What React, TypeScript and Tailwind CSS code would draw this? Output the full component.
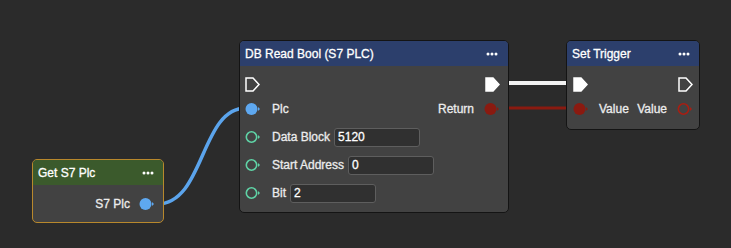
import React from "react";

const font = { fontFamily: '"Liberation Sans", Arial, sans-serif' };

const ExecPin = ({ filled }: { filled?: boolean }) => (
  <svg width="15" height="15" viewBox="0 0 15 15" className="shrink-0">
    <path
      d="M1 1 H8 L14 7.5 L8 14 H1 Z"
      fill={filled ? "#ffffff" : "none"}
      stroke="#ffffff"
      strokeWidth="1.5"
      strokeLinejoin="miter"
    />
  </svg>
);

const DataPin = ({ color, filled }: { color: string; filled?: boolean }) => (
  <svg width="16" height="14" viewBox="0 0 16 14" className="shrink-0">
    <circle
      cx="6.5"
      cy="7"
      r={filled ? 6 : 5.2}
      fill={filled ? color : "none"}
      stroke={color}
      strokeWidth={filled ? 0 : 1.6}
    />
    <path d="M13 5 L15 7 L13 9 Z" fill={color} />
  </svg>
);

const Dots = () => (
  <svg width="12" height="4" viewBox="0 0 12 4" className="shrink-0">
    <circle cx="2" cy="2" r="1.5" fill="#fff" />
    <circle cx="6" cy="2" r="1.5" fill="#fff" />
    <circle cx="10" cy="2" r="1.5" fill="#fff" />
  </svg>
);

const Field = ({ label, value, w }: { label: string; value: string; w: string }) => (
  <div className="flex h-[28px] items-center pl-[5px]">
    <DataPin color="#5fd3a6" />
    <span className="ml-[11px] text-[12px] text-[#ececec] [-webkit-text-stroke:0.3px_#ececec]">{label}</span>
    <div
      className={`ml-[4px] flex h-[19px] items-center rounded-[3px] border border-[#5e5e5e] bg-[#303030] px-[3px] text-[12px] text-white [-webkit-text-stroke:0.3px_#ffffff] ${w}`}
    >
      {value}
    </div>
  </div>
);

const label = "text-[12px] text-[#ececec] [-webkit-text-stroke:0.3px_#ececec]";
const header = "flex h-[25px] items-center justify-between pl-[5px] text-[12px] text-white [-webkit-text-stroke:0.3px_#ffffff]";

export default function App() {
  return (
    <div className="relative h-[248px] w-[731px] overflow-hidden bg-[#2b2b2b]" style={font}>
      <svg className="absolute left-0 top-0" width="731" height="248">
        <path d="M157 204 C 205 204, 200 108, 246 108" fill="none" stroke="#5ba4ec" strokeWidth="3.5" />
        <line x1="500" y1="83" x2="570" y2="83" stroke="#f2f2f2" strokeWidth="4" />
        <line x1="498" y1="108" x2="574" y2="108" stroke="#8a1a10" strokeWidth="3" />
      </svg>

      {/* DB Read Bool */}
      <div className="absolute left-[239px] top-[40px] w-[270px] overflow-hidden rounded-[5px] border border-[#141414] bg-[#424242]">
        <div className={`${header} bg-[#2c3f6c] pr-[10px]`}>
          <span>DB Read Bool (S7 PLC)</span>
          <Dots />
        </div>
        <div className="flex flex-col pb-[5px] pt-[7px]">
          <div className="flex h-[22px] items-center justify-between pl-[5px] pr-[8px]">
            <ExecPin />
            <ExecPin filled />
          </div>
          <div className="flex h-[28px] items-center pl-[5px] pr-[8px]">
            <DataPin color="#5ea8f0" filled />
            <span className={`ml-[11px] ${label}`}>Plc</span>
            <span className={`ml-auto mr-[10px] ${label}`}>Return</span>
            <DataPin color="#8a1a10" filled />
          </div>
          <Field label="Data Block" value="5120" w="w-[86px]" />
          <Field label="Start Address" value="0" w="w-[86px]" />
          <Field label="Bit" value="2" w="w-[86px]" />
        </div>
      </div>

      {/* Set Trigger */}
      <div className="absolute left-[566px] top-[40px] w-[134px] overflow-hidden rounded-[5px] border border-[#141414] bg-[#424242]">
        <div className={`${header} bg-[#2c3f6c] pr-[9px]`}>
          <span>Set Trigger</span>
          <Dots />
        </div>
        <div className="flex flex-col pb-[6px] pt-[7px]">
          <div className="flex h-[22px] items-center justify-between pl-[6px] pr-[6px]">
            <ExecPin filled />
            <ExecPin />
          </div>
          <div className="flex h-[28px] items-center pl-[6px] pr-[6px]">
            <DataPin color="#8a1a10" filled />
            <span className={`ml-[10px] ${label}`}>Value</span>
            <span className={`ml-auto mr-[10px] ${label}`}>Value</span>
            <DataPin color="#a81e12" />
          </div>
        </div>
      </div>

      {/* Get S7 Plc */}
      <div className="absolute left-[32px] top-[159px] w-[132px] overflow-hidden rounded-[5px] border border-[#b8882c] bg-[#424242]">
        <div className={`${header} bg-[#3b5a2c] pr-[9px]`}>
          <span>Get S7 Plc</span>
          <Dots />
        </div>
        <div className="flex flex-col pb-[4px] pt-[5px]">
          <div className="flex h-[28px] items-center justify-end pr-[8px]">
            <span className={`mr-[9px] ${label}`}>S7 Plc</span>
            <DataPin color="#5ea8f0" filled />
          </div>
        </div>
      </div>
    </div>
  );
}
